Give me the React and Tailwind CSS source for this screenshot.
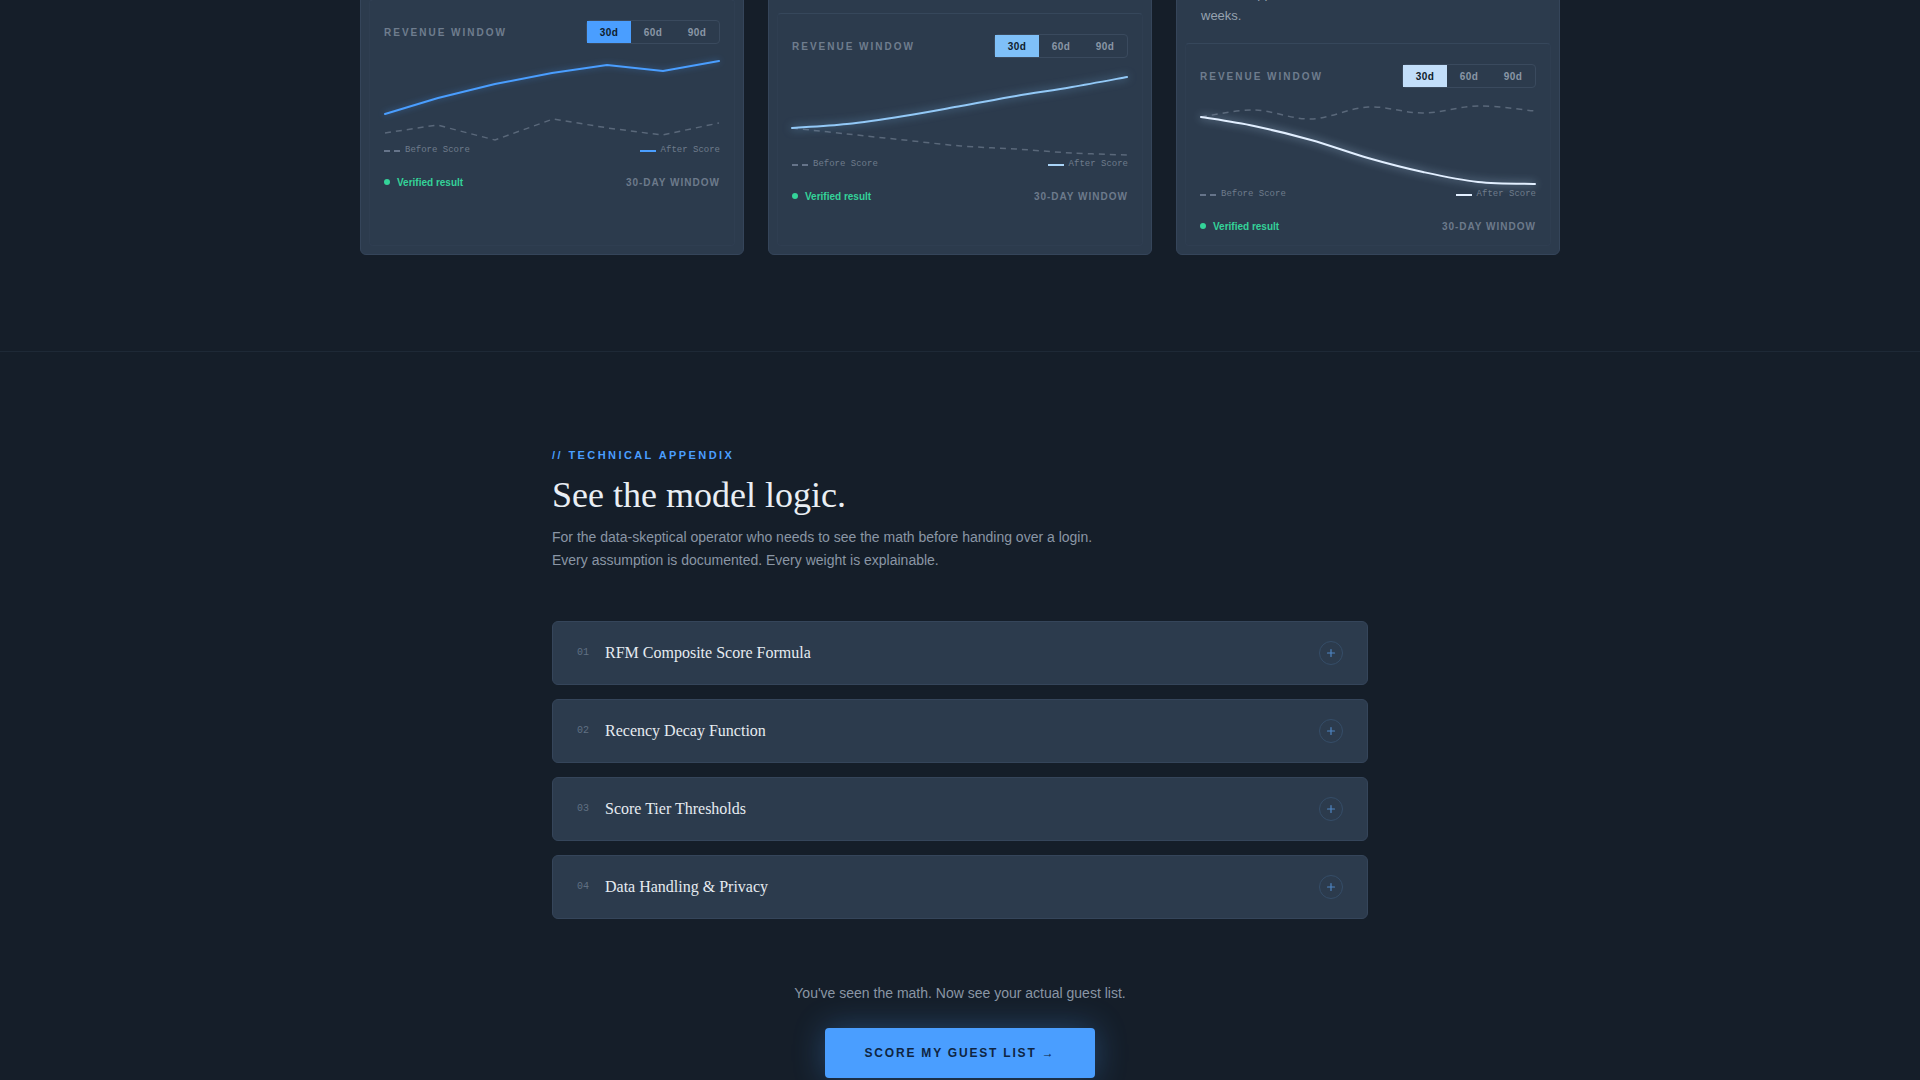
import React from "react";

const SANS = "font-['Liberation_Sans',Arial,sans-serif]";

function linePath(pts) {
  return pts.map((p, i) => (i ? "L" : "M") + p[0] + " " + p[1]).join(" ");
}

function smoothPath(pts) {
  let d = `M${pts[0][0]} ${pts[0][1]}`;
  for (let i = 0; i < pts.length - 1; i++) {
    const p0 = pts[i - 1] || pts[i];
    const p1 = pts[i];
    const p2 = pts[i + 1];
    const p3 = pts[i + 2] || p2;
    const c1x = p1[0] + (p2[0] - p0[0]) / 6;
    const c1y = p1[1] + (p2[1] - p0[1]) / 6;
    const c2x = p2[0] - (p3[0] - p1[0]) / 6;
    const c2y = p2[1] - (p3[1] - p1[1]) / 6;
    d += ` C${c1x.toFixed(2)} ${c1y.toFixed(2)} ${c2x.toFixed(2)} ${c2y.toFixed(2)} ${p2[0]} ${p2[1]}`;
  }
  return d;
}

const cards = [
  {
    upper: "h-[198px]",
    tag: "CASE 01 · STEAKHOUSE GROUP",
    title: "Top-decile guests, first.",
    desc: "Targeted offers to the highest-scoring guests lifted average check within the first month of scoring.",
    line: "#4a9eff",
    active: "bg-[#4a9eff]",
    marker: "bg-[#4a9eff]",
    glow: "drop-shadow-[0_0_3px_rgba(74,158,255,0.45)]",
    smooth: false,
    after: [[1, 62], [54, 46], [111, 32], [168, 21], [223, 13], [279, 19], [335, 9]],
    before: [[1, 81], [53, 73], [111, 88], [169, 67], [224, 76], [278, 83], [335, 71]],
  },
  {
    upper: "h-[212px]",
    tag: "CASE 02 · WINE BAR",
    title: "Lapsed regulars returned.",
    desc: "Recency-weighted outreach brought back guests who had drifted, without discounting the whole list.",
    line: "#93c9f7",
    active: "bg-[#7fc0f8]",
    marker: "bg-[#a9d3f6]",
    glow: "drop-shadow-[0_0_4px_rgba(125,189,245,0.65)]",
    smooth: true,
    after: [[0, 62], [55, 58], [112, 50], [169, 40], [224, 30], [280, 21], [335, 11]],
    before: [[0, 62], [55, 68], [112, 74], [169, 80], [224, 83], [280, 87], [335, 89]],
  },
  {
    upper: "h-[242px]",
    tag: "CASE 03 · TASTING ROOM",
    title: "Comp waste, cut.",
    desc: "Comps were redirected from low-score walk-ins to high-score guests, which increased visit frequency. Comp waste dropped 32% in 6",
    desc2: "weeks.",
    line: "#e2efff",
    active: "bg-[#c2defa]",
    marker: "bg-[#e2efff]",
    glow: "drop-shadow-[0_0_4px_rgba(190,222,255,0.7)]",
    smooth: true,
    after: [[1, 21], [54, 30], [111, 44], [168, 62], [223, 76], [278, 86], [335, 88]],
    before: [[1, 21], [54, 14], [111, 23], [168, 11], [223, 17], [278, 10], [335, 15]],
  },
];

function Chart({ c }) {
  const make = c.smooth ? smoothPath : linePath;
  return (
    <svg viewBox="0 0 336 92" className="block w-full h-[92px] overflow-visible" preserveAspectRatio="none">
      <path
        d={make(c.before)}
        fill="none"
        stroke="#5a687a"
        strokeWidth="1.5"
        strokeDasharray="6 5"
        vectorEffect="non-scaling-stroke"
      />
      <path
        d={make(c.after)}
        fill="none"
        stroke={c.line}
        strokeWidth="2"
        strokeLinecap="round"
        strokeLinejoin="round"
        vectorEffect="non-scaling-stroke"
        className={c.glow}
      />
    </svg>
  );
}

function Card({ c }) {
  return (
    <div className="flex flex-col rounded-md border border-[#35455a] bg-[#2c3b4d]">
      <div className={`${c.upper} flex flex-col justify-end px-6 pb-4`}>
        <p className={`${SANS} text-[10px] font-bold tracking-[0.2em] text-[#4a9eff]`}>{c.tag}</p>
        <h3 className="mt-3 font-['Liberation_Serif',serif] text-[22px] leading-7 text-[#e8edf3]">{c.title}</h3>
        <p className={`${SANS} mt-3 text-[13px] leading-[22px] text-[#96a2b0]`}>
          {c.desc}
          {c.desc2 ? (
            <>
              <br />
              {c.desc2}
            </>
          ) : null}
        </p>
      </div>
      <div className="mx-2 mb-2 flex flex-1 flex-col rounded-sm border border-[#2f3e51] border-t-[#36475b] px-[14px] pt-5 pb-3">
        <div className="flex h-6 items-center justify-between">
          <span className={`${SANS} text-[10px] font-bold tracking-[0.2em] text-[#6f7d8e]`}>REVENUE WINDOW</span>
          <div className="flex rounded-sm border border-[#3a4a5e]">
            <span className={`${c.active} ${SANS} flex h-[22px] w-[44px] items-center justify-center text-[10px] font-bold tracking-[0.04em] text-[#0f1c2c]`}>
              30d
            </span>
            <span className={`${SANS} flex h-[22px] w-[44px] items-center justify-center text-[10px] font-bold tracking-[0.04em] text-[#8996a6]`}>
              60d
            </span>
            <span className={`${SANS} flex h-[22px] w-[44px] items-center justify-center text-[10px] font-bold tracking-[0.04em] text-[#8996a6]`}>
              90d
            </span>
          </div>
        </div>
        <div className="mt-2">
          <Chart c={c} />
        </div>
        <div className="mt-px flex h-3 items-center justify-between font-['Liberation_Mono',monospace] text-[9px] text-[#6f7c8c]">
          <div className="flex items-center gap-[5px]">
            <span className="flex gap-[4px]">
              <span className="h-[1.5px] w-[6px] bg-[#66748a]" />
              <span className="h-[1.5px] w-[6px] bg-[#66748a]" />
            </span>
            <span>Before Score</span>
          </div>
          <div className="flex items-center gap-[5px]">
            <span className={`h-[2px] w-4 ${c.marker}`} />
            <span>After Score</span>
          </div>
        </div>
        <div className="mt-[18px] flex h-[14px] items-center justify-between">
          <div className="flex items-center gap-[7px]">
            <span className="h-[6px] w-[6px] rounded-full bg-[#34d399]" />
            <span className={`${SANS} text-[10px] font-bold text-[#34d399]`}>Verified result</span>
          </div>
          <span className={`${SANS} text-[10px] font-bold tracking-[0.1em] text-[#6c7a8b]`}>30-DAY WINDOW</span>
        </div>
      </div>
    </div>
  );
}

const items = [
  ["01", "RFM Composite Score Formula"],
  ["02", "Recency Decay Function"],
  ["03", "Score Tier Thresholds"],
  ["04", "Data Handling & Privacy"],
];

function PlusIcon() {
  return (
    <span className="flex h-6 w-6 items-center justify-center rounded-full border border-[#354d68]">
      <svg width="10" height="10" viewBox="0 0 10 10">
        <path d="M5 1.5V8.5M1.5 5H8.5" stroke="#4f86c4" strokeWidth="1.2" strokeLinecap="round" />
      </svg>
    </span>
  );
}

export default function App() {
  return (
    <div className={`min-h-screen overflow-hidden bg-[#151e29] ${SANS}`}>
      <section className="-mt-[200px] pb-24">
        <div className="mx-auto grid w-[1200px] grid-cols-3 gap-6">
          {cards.map((c, i) => (
            <Card key={i} c={c} />
          ))}
        </div>
      </section>

      <section className="border-t border-[#1e2936] pt-24 pb-24">
        <div className="mx-auto w-[816px]">
          <p className="text-[11px] font-bold leading-[15px] tracking-[0.22em] text-[#4a9eff]">// TECHNICAL APPENDIX</p>
          <h2 className="mt-3 font-['Liberation_Serif',serif] text-4xl leading-10 font-normal text-[#e9eef4]">
            See the model logic.
          </h2>
          <p className="mt-[11px] max-w-xl text-sm leading-[23px] text-[#8a96a5]">
            For the data-skeptical operator who needs to see the math before handing over a login. Every assumption is
            documented. Every weight is explainable.
          </p>

          <div className="mt-[49px] flex flex-col gap-[14px]">
            {items.map(([n, t]) => (
              <div
                key={n}
                className="flex h-16 items-center justify-between rounded-md border border-[#35455a] bg-[#2c3b4d] pl-6 pr-6"
              >
                <div className="flex items-center">
                  <span className="w-7 font-['Liberation_Mono',monospace] text-[10px] leading-4 text-[#607083]">{n}</span>
                  <span className="font-['Liberation_Serif',serif] text-base leading-6 text-[#e6ebf1]">{t}</span>
                </div>
                <PlusIcon />
              </div>
            ))}
          </div>

          <p className="mt-16 text-center text-sm leading-[21px] text-[#8a96a5]">
            You've seen the math. Now see your actual guest list.
          </p>
          <div className="mt-6 flex justify-center">
            <button className="flex h-[50px] w-[270px] items-center justify-center rounded-sm bg-[#4a9eff] text-xs font-bold tracking-[0.15em] text-[#0f2542] shadow-[0_0_32px_rgba(74,158,255,0.3)]">
              SCORE MY GUEST LIST →
            </button>
          </div>
        </div>
      </section>
    </div>
  );
}
